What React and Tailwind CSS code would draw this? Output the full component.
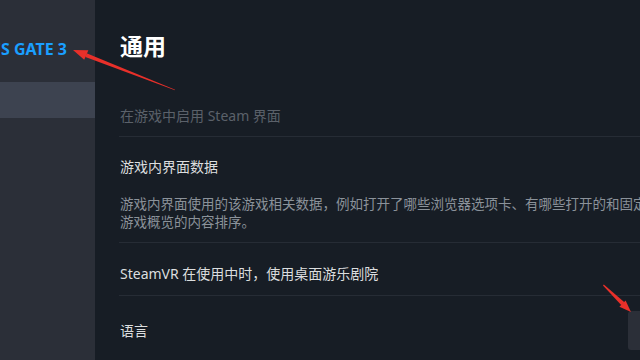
import React from 'react';

const font = { fontFamily: '"Noto Sans", "Noto Sans CJK SC", sans-serif' };

function Arrows() {
  return (
    <svg className="pointer-events-none absolute inset-0" width="640" height="360" viewBox="0 0 640 360">
      {/* arrow pointing at the game title */}
      <polygon points="175,90.3 174.6,89.4 86.6,53.3 85.4,56.9" fill="#e8302a" />
      <polygon points="73,50 88.4,50.2 84.2,59.8" fill="#e8302a" />
      {/* arrow pointing at the language dropdown */}
      <polygon points="603,285.6 603.8,284.6 624.4,302.2 621.4,305.2" fill="#e8302a" />
      <polygon points="631,312 619.4,306.8 625.6,300.6" fill="#e8302a" />
    </svg>
  );
}

export default function App() {
  return (
    <div className="relative flex h-[360px] w-[640px] overflow-hidden bg-[#171d25]" style={font}>
      <aside className="flex w-[95px] shrink-0 flex-col bg-[#2b2f38]">
        <div className="flex h-[82px] justify-end overflow-hidden whitespace-nowrap pr-[28px] pt-[39px]">
          <span className="text-[16px] font-bold leading-[20px] text-[#1a9fff]">BALDUR'S GATE 3</span>
        </div>
        <div className="h-[36px] bg-[#3d4350]" />
      </aside>

      <main className="min-w-0 flex-1 overflow-hidden pl-[24px]">
        <div className="w-[669px]">
          <h1 className="pl-[1px] pt-[32px] text-[23px] font-bold leading-[28px] text-white">通用</h1>

          <div className="mt-[46px] border-b border-[#262c35] pb-[10px]">
            <p className="pl-[1px] text-[14px] leading-[20px] text-[#5b616a]">在游戏中启用 Steam 界面</p>
          </div>

          <div className="border-b border-[#262c35] pb-[11px] pl-[1px] pt-[20px]">
            <p className="text-[14px] leading-[20px] text-[#dcdedf]">游戏内界面数据</p>
            <div className="mt-[18px] text-[13.5px] leading-[18px] text-[#8b929a]">
              <p className="whitespace-nowrap">游戏内界面使用的该游戏相关数据，例如打开了哪些浏览器选项卡、有哪些打开的和固定的窗口，以及</p>
              <p className="whitespace-nowrap">游戏概览的内容排序。</p>
            </div>
          </div>

          <div className="border-b border-[#262c35] pb-[11px] pl-[1px] pt-[21px]">
            <p className="text-[14px] leading-[20px] text-[#dcdedf]">SteamVR 在使用中时，使用桌面游乐剧院</p>
          </div>

          <div className="flex items-center justify-between pl-[1px] pt-[15px]">
            <p className="text-[14px] leading-[20px] text-[#dcdedf]">语言</p>
            <div className="h-[39px] w-[160px] rounded-[3px] bg-[#2b2f38]" />
          </div>
        </div>
      </main>

      <Arrows />
    </div>
  );
}
